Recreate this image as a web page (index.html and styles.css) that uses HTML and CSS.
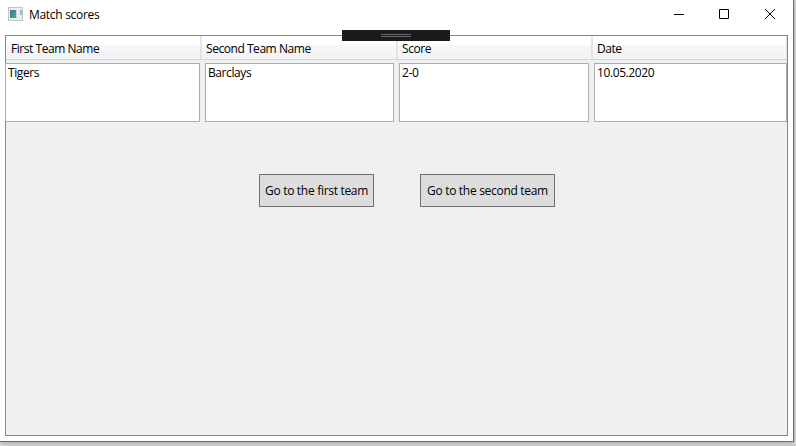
FILE: index.html
```
<!DOCTYPE html>
<html lang="en">
<head>
<meta charset="utf-8">
<title>Match scores</title>
<link rel="stylesheet" href="styles.css">
</head>
<body>
<div class="window">
  <header class="titlebar">
    <svg class="app-icon" width="16" height="14" viewBox="0 0 16 14">
      <defs><linearGradient id="g" x1="0" y1="0" x2="1" y2="1"><stop offset="0" stop-color="#3f74a0"/><stop offset="1" stop-color="#55a87c"/></linearGradient></defs>
      <rect x=".5" y=".5" width="14" height="13" fill="#eceeef" stroke="#c3c6c9"/>
      <rect x="2" y="3" width="6" height="8" fill="url(#g)"/>
      <rect x="8" y="3" width="1" height="8" fill="#c5d9d8"/>
      <rect x="12" y="3" width="2" height="5" fill="#93b9cc"/>
    </svg>
    <h1 class="title">Match scores</h1>
    <div class="controls">
      <svg class="minimize" width="10" height="10" viewBox="0 0 10 10"><path d="M0 5.5H10"/></svg>
      <svg width="10" height="10" viewBox="0 0 10 10"><path d="M.5 .5H9.5V9.5H.5Z"/></svg>
      <svg width="10" height="10" viewBox="0 0 10 10"><path d="M0 0L10 10M10 0L0 10"/></svg>
    </div>
  </header>
  <div class="debug-bar"><span class="grip"></span></div>
  <main class="list">
    <div class="head">
      <div class="col"><span>First Team Name</span></div>
      <div class="col"><span>Second Team Name</span></div>
      <div class="col"><span>Score</span></div>
      <div class="col"><span>Date</span></div>
    </div>
    <div class="row">
      <div class="cell"><span>Tigers</span></div>
      <div class="cell"><span>Barclays</span></div>
      <div class="cell"><span>2-0</span></div>
      <div class="cell"><span>10.05.2020</span></div>
    </div>
    <div class="actions">
      <button class="first"><span>Go to the first team</span></button>
      <button class="second"><span>Go to the second team</span></button>
    </div>
  </main>
</div>
</body>
</html>
```
FILE: styles.css
```
* { box-sizing: border-box; }
body {
  margin: 0;
  width: 796px;
  height: 446px;
  overflow: hidden;
  background: #d8d8d8;
  font: 12px/16px "Open Sans", "Noto Sans", sans-serif;
  letter-spacing: -0.3px;
  color: #000;
}
.window {
  position: relative;
  width: 794px;
  height: 442px;
  background: #fff;
  border: solid #1e80c9;
  border-width: 0 1px 1px 0;
  box-shadow: 0 1px 6px rgba(0, 0, 0, .25);
}
.titlebar {
  display: flex;
  align-items: center;
  height: 35px;
  padding: 0 18px 7px 8px;
}
.title { margin: 1px 0 0 5px; font-size: 12px; font-weight: 400; }
.controls { display: flex; gap: 36px; margin-left: auto; }
.controls svg { fill: none; stroke: #000; stroke-width: 1; }
.controls .minimize { margin-right: -1px; }
.debug-bar {
  position: absolute;
  left: 342px;
  top: 30px;
  z-index: 1;
  width: 108px;
  height: 11px;
  background: #1b1b1b;
}
.grip {
  display: block;
  width: 30px;
  height: 3px;
  margin: 4px 0 0 39px;
  border: solid #696969;
  border-width: 1px 0;
}
.list {
  width: 783px;
  height: 401px;
  margin-left: 5px;
  border: 1px solid #688caf;
  background: #f0f0f0;
}
.head {
  display: grid;
  grid-template-columns: 196px 196px 195px 194px;
  height: 24px;
  border-bottom: 1px solid #d5d5d5;
  background: linear-gradient(#fff 0, #fff 40%, #f7f8fa 41%, #f1f2f4 100%);
  letter-spacing: -0.45px;
}
.col { padding: 5px 0 0 4px; border-right: 2px solid #e3e4e6; }
.col:first-child { padding-left: 5px; }
.col:last-child { border-right-width: 1px; }
.col span, .cell span, button span { display: block; white-space: nowrap; }
.row {
  display: grid;
  grid-template-columns: 195px 189px 190px 193px;
  column-gap: 5px;
  height: 59px;
  margin: 3px -1px 0;
}
.cell { padding: 1px 0 0 2px; border: 1px solid #abadb3; background: #fff; letter-spacing: -0.4px; }
.actions { display: flex; gap: 46px; margin: 52px 0 0 253px; }
button {
  height: 33px;
  padding: 0;
  border: 1px solid #707070;
  background: #ddd;
  font: inherit;
  letter-spacing: inherit;
  color: #000;
}
button span { text-align: left; padding-left: 5px; }
.first { width: 115px; }
.second { width: 135px; }
.second span { padding-left: 6px; }
```
